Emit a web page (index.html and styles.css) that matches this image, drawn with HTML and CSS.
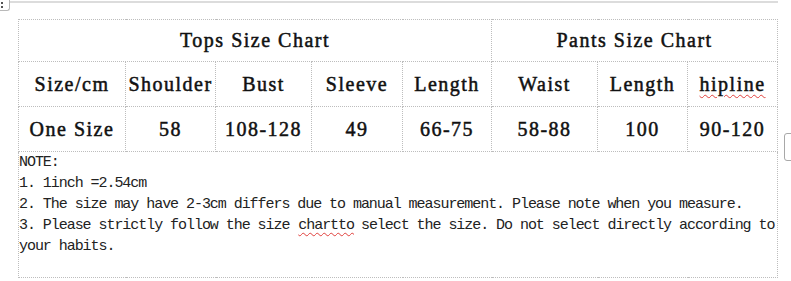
FILE: index.html
```html
<!DOCTYPE html>
<html>
<head>
<meta charset="utf-8">
<link rel="stylesheet" href="styles.css">
</head>
<body>
<div class="topbar">
  <div class="corner"><span class="dot"></span><span class="dot"></span></div>
  <div class="rule"></div>
</div>
<div class="side-handle"></div>
<table class="chart">
  <colgroup>
    <col style="width:107px"><col style="width:90px"><col style="width:96px"><col style="width:91px">
    <col style="width:89px"><col style="width:106px"><col style="width:90px"><col style="width:90px">
  </colgroup>
  <tr class="r-title">
    <td colspan="5">Tops Size Chart</td>
    <td colspan="3">Pants Size Chart</td>
  </tr>
  <tr class="r-head">
    <td>Size/cm</td><td>Shoulder</td><td>Bust</td><td>Sleeve</td><td>Length</td>
    <td>Waist</td><td>Length</td><td><span class="spell">hipline</span></td>
  </tr>
  <tr class="r-data">
    <td>One Size</td><td>58</td><td>108-128</td><td>49</td><td>66-75</td>
    <td>58-88</td><td>100</td><td>90-120</td>
  </tr>
  <tr class="r-note">
    <td colspan="8">
      <div class="note">NOTE:<br>1. 1inch =2.54cm<br>2. The size may have 2-3cm differs due to manual measurement. Please note when you measure.<br>3. Please strictly follow the size <span class="spell gap">chartto</span> select the size. Do not select directly according to <span>your habits.</span></div>
    </td>
  </tr>
</table>
</body>
</html>
```

FILE: styles.css
```css
html, body {
  margin: 0;
  padding: 0;
  background: #ffffff;
}
body {
  position: relative;
  width: 791px;
  height: 281px;
  overflow: hidden;
  font-family: "Liberation Serif", serif;
  color: #111;
}
.topbar {
  display: flex;
  align-items: flex-start;
  height: 19px;
}
.corner {
  width: 10px;
  height: 11px;
  border-right: 1px solid #b9b9b9;
  border-bottom: 1px solid #b9b9b9;
  border-bottom-right-radius: 3px;
  display: flex;
  flex-direction: column;
  gap: 2px;
  padding: 2px 0 0 1px;
  box-sizing: border-box;
  flex: none;
}
.dot {
  display: block;
  width: 2px;
  height: 2px;
  background: #555;
}
.rule {
  flex: none;
  width: 768px;
  height: 2px;
  margin-top: 1px;
  background: #dcdcdc;
}
.side-handle {
  position: absolute;
  left: 784px;
  top: 133px;
  width: 14px;
  height: 26px;
  border: 1px solid #a8a8a8;
  border-radius: 3px;
  background: #fff;
}
.chart {
  margin-left: 18px;
  border-collapse: collapse;
  table-layout: fixed;
  width: 759px;
}
.chart td {
  border: 1px dotted #bdbdbd;
  padding: 0;
  text-align: center;
  vertical-align: middle;
  font-weight: normal;
  font-size: 20px;
  letter-spacing: 1.5px;
  -webkit-text-stroke: 0.5px #111;
  white-space: nowrap;
}
.r-title td { height: 41px; }
.r-head td { height: 44px; }
.r-data td { height: 44px; }
.r-note td {
  height: 125px;
  text-align: left;
  vertical-align: top;
  white-space: normal;
  letter-spacing: 0;
  -webkit-text-stroke: 0;
}
.note {
  font-family: "Liberation Mono", monospace;
  font-size: 15px;
  letter-spacing: -1.05px;
  line-height: 21px;
  color: #222;
}
.spell {
  text-decoration: underline wavy #e0403c;
  text-decoration-thickness: 1px;
  text-underline-offset: 3px;
}
.gap {
  margin-left: 1px;
  margin-right: -1px;
}
```
